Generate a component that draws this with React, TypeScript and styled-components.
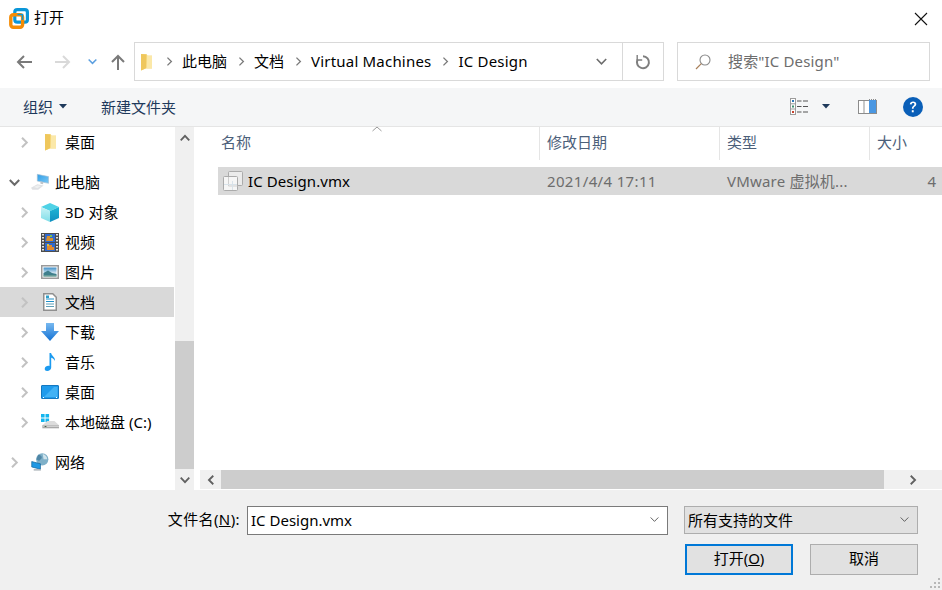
import * as React from 'react';
import styled, { createGlobalStyle } from 'styled-components';

const Global = createGlobalStyle`
    html, body {
        margin: 0;
        padding: 0;
        background: #fff;
        overflow: hidden;
    }
    * {
        box-sizing: border-box;
    }
`

const Dialog = styled.div`
    position: relative;
    width: 942px;
    height: 590px;
    display: flex;
    flex-direction: column;
    overflow: hidden;
    background: #fff;
    color: #000;
    font-family: 'Noto Sans', 'Noto Sans CJK SC', sans-serif;
    font-size: 15px;
    line-height: 20px;
`

const TitleBar = styled.div`
    height: 38px;
    flex: none;
    display: flex;
    align-items: center;
    padding: 0 14px 1px 9px;
    gap: 5px;
`

const TitleText = styled.span`
    flex: 1;
    padding-bottom: 3px;
`

const NavBar = styled.div`
    height: 50px;
    flex: none;
    display: flex;
    padding: 4px 12px 7px 0;
`

const NavButtons = styled.div`
    width: 134px;
    flex: none;
    display: grid;
    grid-template-columns: 39px 33px 22px 24px;
    align-items: center;
    padding-left: 16px;
`

const AddressBox = styled.div`
    width: 530px;
    flex: none;
    border: 1px solid #d9d9d9;
    display: flex;
    align-items: center;
    padding-left: 5px;
`

const FolderSlot = styled.span`
    width: 24px;
    display: flex;
`

const Crumb = styled.span<{ $latin?: boolean }>`
    margin: 0 9px 0 8px;
    padding-bottom: 2px;
    white-space: nowrap;
    letter-spacing: ${p => (p.$latin ? '.2px' : '0')};
`

const CrumbSep = styled.span`
    display: flex;
    width: 10px;
    justify-content: center;
`

const AddressEnd = styled.div`
    margin-left: auto;
    height: 100%;
    display: flex;
    align-items: center;
`

const DropZone = styled.div`
    width: 42px;
    display: flex;
    justify-content: center;
`

const RefreshZone = styled.div`
    width: 41px;
    height: 100%;
    border-left: 1px solid #d9d9d9;
    display: flex;
    align-items: center;
    justify-content: center;
`

const SearchBox = styled.div`
    width: 253px;
    margin-left: 13px;
    flex: none;
    border: 1px solid #d9d9d9;
    display: flex;
    align-items: center;
    padding-left: 17px;
    gap: 17px;
    color: #6d6d6d;
`

const SearchText = styled.span`
    padding-bottom: 2px;
    letter-spacing: .15px;
`

const ToolBar = styled.div`
    height: 39px;
    flex: none;
    background: #f5f6f7;
    border-bottom: 1px solid #e5e5e5;
    display: flex;
    align-items: center;
    padding: 0 19px 1px 23px;
    color: #1e395b;
`

const ToolLabel = styled.span`
    display: flex;
    align-items: center;
    gap: 6px;
    margin-right: 34px;
`

const ToolIcons = styled.div`
    margin-left: auto;
    display: flex;
    align-items: center;
`

const ViewCaret = styled.span`
    display: flex;
    margin: 0 28px 0 14px;
`

const HelpSlot = styled.span`
    display: flex;
    margin-left: 26px;
`

const Main = styled.div`
    height: 363px;
    flex: none;
    display: grid;
    grid-template-columns: 174px 21px 5px 1fr;
`

const Sidebar = styled.div`
    overflow: hidden;
    display: flex;
    flex-direction: column;
`

const TreeRow = styled.div<{ $level: number; $active?: boolean; $gap?: boolean }>`
    height: 30px;
    flex: none;
    display: flex;
    align-items: center;
    padding-left: ${p => (p.$level === 0 ? 9 : 19)}px;
    margin-top: ${p => (p.$gap ? 10 : 0)}px;
    background: ${p => (p.$active ? '#d9d9d9' : 'transparent')};
    white-space: nowrap;
`

const TreeToggle = styled.span`
    width: 11px;
    display: flex;
    justify-content: center;
    margin-right: 11px;
`

const TreeIcon = styled.span`
    width: 18px;
    height: 20px;
    margin-right: 6px;
    display: flex;
    align-items: center;
    justify-content: center;
`

const VScroll = styled.div`
    background: #f0f0f0;
    margin-left: 1px;
    width: 19px;
    display: flex;
    flex-direction: column;
    align-items: stretch;
`

const ScrollEnd = styled.div`
    height: 21px;
    flex: none;
    display: flex;
    align-items: center;
    justify-content: center;
`

const VTrack = styled.div`
    flex: 1;
    display: flex;
    flex-direction: column;
    justify-content: flex-end;
`

const VThumb = styled.div`
    height: 128px;
    background: #cdcdcd;
`

const ListPane = styled.div`
    display: flex;
    flex-direction: column;
    min-width: 0;
`

const ListHead = styled.div`
    height: 33px;
    flex: none;
    display: grid;
    grid-template-columns: 340px 180px 150px 1fr;
    color: #4c607a;
`

const HeadCell = styled.div<{ $first?: boolean }>`
    position: relative;
    display: flex;
    align-items: center;
    padding-left: ${p => (p.$first ? 21 : 7)}px;
    padding-bottom: 3px;
    border-right: 1px solid #e5e5e5;
    &:last-child {
        border-right: 0;
    }
`

const SortCaret = styled.svg`
    position: absolute;
    left: 172px;
    top: -1px;
`

const ListBody = styled.div`
    flex: 1;
    padding: 7px 0 0 18px;
`

const FileRow = styled.div`
    height: 28px;
    background: #d9d9d9;
    display: grid;
    grid-template-columns: 322px 180px 150px 1fr;
    align-items: center;
    color: #6d6d6d;
    white-space: nowrap;
`

const FileName = styled.div`
    display: flex;
    align-items: center;
    gap: 5px;
    padding-left: 5px;
    color: #000;
    letter-spacing: .08px;
`

const FileCell = styled.div<{ $spacing: number }>`
    padding-left: 7px;
    padding-bottom: 1px;
    letter-spacing: ${p => p.$spacing}px;
`

const FileSize = styled.div`
    text-align: right;
    padding-right: 6px;
    padding-bottom: 1px;
`

const HScroll = styled.div`
    height: 19px;
    margin-bottom: 1px;
    flex: none;
    display: grid;
    grid-template-columns: 21px 663px 1fr;
    background: #f0f0f0;
`

const HEnd = styled.div`
    display: flex;
    align-items: center;
    justify-content: center;
`

const HThumb = styled.div`
    background: #cdcdcd;
`

const Footer = styled.div`
    flex: 1;
    background: #f0f0f0;
    padding: 16px 24px 0 0;
    display: flex;
    flex-direction: column;
`

const FooterRow = styled.div`
    display: flex;
    align-items: flex-start;
    justify-content: flex-end;
`

const FileLabel = styled.label`
    margin-right: 7px;
    line-height: 27px;
    letter-spacing: .4px;
    white-space: nowrap;
`

const FileInput = styled.div`
    width: 421px;
    height: 29px;
    background: #fff;
    border: 1px solid #7a7a7a;
    display: flex;
    align-items: center;
    justify-content: space-between;
    padding: 0 8px 2px 3px;
    margin-right: 16px;
`

const TypeSelect = styled.div`
    width: 234px;
    height: 28px;
    background: #e1e1e1;
    border: 1px solid #adadad;
    display: flex;
    align-items: center;
    justify-content: space-between;
    padding: 0 8px 1px 3px;
`

const Actions = styled(FooterRow)`
    margin-top: 9px;
    gap: 17px;
`

const Button = styled.div<{ $primary?: boolean }>`
    width: 108px;
    height: 31px;
    background: #e1e1e1;
    border: ${p => (p.$primary ? '2px solid #0078d7' : '1px solid #adadad')};
    display: flex;
    align-items: center;
    justify-content: center;
    padding-bottom: 3px;
`

const Grip = styled.svg`
    position: absolute;
    right: 1px;
    bottom: 1px;
`

const Chevron: React.FC<{ dir?: 'right' | 'down' | 'left' | 'up'; color?: string; size?: number; width?: number }> = ({
    dir = 'right',
    color = '#c2c2c2',
    size = 11,
    width = 2,
}) => {
    const rot = { right: 0, down: 90, left: 180, up: 270 }[dir];
    return (
        <svg width={size} height={size} viewBox="0 0 11 11" fill="none" style={{ display: 'block' }}>
            <path d="M3 .8 7.800 5.500 3 10.200" stroke={color} strokeWidth={width} transform={`rotate(${rot} 5.500 5.500)`} />
        </svg>
    )
}

const FolderIcon: React.FC = () => (
    <svg width="13" height="18" viewBox="0 0 13 18">
        <path d="M1 1h5.500l1 1.500H12v13H6L1 17.500z" fill="#f8de8d" />
        <path d="M6.500 1.500 1 1v16.500l5.500-2.500z" fill="#efc75c" />
        <path d="M7 3h5v12.500H6.500z" fill="#fbe8a8" />
    </svg>
)

const VmwareIcon: React.FC = () => (
    <svg width="20" height="21" viewBox="0 0 20 21" style={{ flex: 'none' }}>
        <rect x="5.800" y="1.600" width="12.600" height="12.600" rx="2.500" fill="none" stroke="#0a96d8" strokeWidth="3.200" />
        <rect x="1.800" y="6.800" width="11.800" height="12.400" rx="2.500" fill="none" stroke="#f48c06" strokeWidth="3.400" />
        <path d="M8.500 6.500h5V12" fill="none" stroke="#0a96d8" strokeWidth="1.600" />
    </svg>
)

const PcIcon: React.FC = () => (
    <svg width="20" height="18" viewBox="0 0 20 18">
        <defs>
            <linearGradient id="screen" x1="0" y1="0" x2="1" y2="1">
                <stop offset="0" stopColor="#2f9ee8" />
                <stop offset="1" stopColor="#7cc8f4" />
            </linearGradient>
        </defs>
        <path d="M7 .5 19.500 3v7.500L7 8z" fill="url(#screen)" stroke="#a9c0d0" strokeWidth=".7" />
        <path d="M10.500 8.500v2.500l3 .5v-2.500z" fill="#bfc4c9" />
        <path d="M0 15.500 7 11.500l7 1.500-6 4.500H1.500z" fill="#dfe1e4" />
        <path d="M3 14.500 7.500 12.500l3.500 1-4 2.500z" fill="#eef0f1" />
    </svg>
)

const CubeIcon: React.FC = () => (
    <svg width="18" height="19" viewBox="0 0 18 19">
        <defs>
            <linearGradient id="cubeL" x1="0" y1="0" x2="0" y2="1">
                <stop offset="0" stopColor="#c9f3f6" />
                <stop offset="1" stopColor="#7fdde8" />
            </linearGradient>
            <linearGradient id="cubeR" x1="0" y1="0" x2="0" y2="1">
                <stop offset="0" stopColor="#1fb6d6" />
                <stop offset="1" stopColor="#0f8fc0" />
            </linearGradient>
        </defs>
        <path d="M9 0 18 4 9 8 0 4z" fill="#4fd2e6" />
        <path d="M0 4 9 8v11L0 15z" fill="url(#cubeL)" />
        <path d="M18 4 9 8v11l9-4z" fill="url(#cubeR)" />
    </svg>
)

const FilmIcon: React.FC = () => (
    <svg width="18" height="19" viewBox="0 0 18 19">
        <rect width="18" height="19" fill="#4d4d4d" />
        <path d="M1 1h2v1.500H1zm0 3h2v1.500H1zm0 3h2v1.500H1zm0 3h2v1.500H1zm0 3h2v1.500H1zm0 3h2v1.500H1zM15 1h2v1.500h-2zm0 3h2v1.500h-2zm0 3h2v1.500h-2zm0 3h2v1.500h-2zm0 3h2v1.500h-2zm0 3h2v1.500h-2z" fill="#e4e4e4" />
        <rect x="4" y="1" width="10" height="8" fill="#2f6ad0" />
        <rect x="4" y="10" width="10" height="8" fill="#2f6ad0" />
        <path d="M6 3h3v2h3v3H5z" fill="#d8902c" />
        <path d="M9 2h2v2H9z" fill="#7fc04a" />
        <path d="M6 12h5v2h2v3H6z" fill="#e08a2e" />
        <path d="M6 11h2v2H6z" fill="#e0c53a" />
    </svg>
)

const PictureIcon: React.FC = () => (
    <svg width="18" height="14" viewBox="0 0 18 14">
        <defs>
            <linearGradient id="sky" x1="0" y1="0" x2="0" y2="1">
                <stop offset="0" stopColor="#3f8fc8" />
                <stop offset=".6" stopColor="#cfe4f0" />
            </linearGradient>
        </defs>
        <rect x=".75" y=".75" width="16.500" height="12.500" fill="#fff" stroke="#9a9a9a" strokeWidth="1.500" />
        <rect x="2.500" y="2.500" width="13" height="9" fill="url(#sky)" />
        <path d="M2.500 8 7 5.500l4 2.500 4.500 1v2.500h-13z" fill="#3f7f8c" />
        <path d="M2.500 10.500h13v1h-13z" fill="#8cb6a0" />
    </svg>
)

const DocIcon: React.FC = () => (
    <svg width="14" height="18" viewBox="0 0 14 18">
        <path d="M.75.75h9l3.500 3.500v13H.75z" fill="#fff" stroke="#8f8f8f" strokeWidth="1.500" />
        <path d="M3 6h8M3 8.500h8" stroke="#1e8fc8" />
        <path d="M3 11h8M3 13.500h8" stroke="#5f9fb8" />
        <path d="M3 2.500h3V5H3z" fill="#2f9fc8" />
    </svg>
)

const DownloadIcon: React.FC = () => (
    <svg width="18" height="18" viewBox="0 0 18 18">
        <defs>
            <linearGradient id="dl" x1="0" y1="0" x2="0" y2="1">
                <stop offset="0" stopColor="#78b9f0" />
                <stop offset="1" stopColor="#1372d4" />
            </linearGradient>
        </defs>
        <path d="M5 0h8v8h5l-9 10L0 8h5z" fill="url(#dl)" />
    </svg>
)

const MusicIcon: React.FC = () => (
    <svg width="12" height="18" viewBox="0 0 12 18">
        <path d="M5.500 0h1.600c.4 3 4.400 4 3.900 8-.8-2-2.800-3-3.800-3.200V14.500c0 2-2 3.500-4 3.500S.5 17 .8 15.200C1.100 13.500 3.500 12.300 5.500 13z" fill="#1c9bf0" />
    </svg>
)

const DesktopIcon: React.FC = () => (
    <svg width="18" height="14" viewBox="0 0 18 14">
        <rect x=".5" y=".5" width="17" height="13" rx=".5" fill="#1f9bec" stroke="#1478c0" />
        <path d="M3 12 13 2h3.500v10z" fill="#42b2f5" />
        <path d="M2 12h1v1H2zM15 12h1v1h-1z" fill="#fff" />
    </svg>
)

const DiskIcon: React.FC = () => (
    <svg width="20" height="18" viewBox="0 0 20 18">
        <path d="M0 0h4v4H0zm5 0h4v4H5zM0 5h4v4H0zm5 0h4v4H5z" fill="#14b5ee" />
        <path d="M1.500 12.500 7 8h8l5 4.500z" fill="#dcdcdc" />
        <path d="M1.500 12.500H20V16H1.500z" fill="#a8a8a8" />
        <path d="M2.500 13H20v1.500H2.500z" fill="#d2d2d2" />
        <path d="M4 13.500h2v1H4z" fill="#3a5a3a" />
    </svg>
)

const NetworkIcon: React.FC = () => (
    <svg width="20" height="20" viewBox="0 0 20 20">
        <circle cx="12.500" cy="7" r="6.800" fill="#7fb0c8" />
        <path d="M8 2c2 0 4 1 4 3s-2 2-3 4l-3-2z" fill="#4f86a6" />
        <path d="M13 1c3 1 5 3 5 6h-4z" fill="#cfe3ec" />
        <path d="M.8 9.500 10.500 12v6L.8 15.500z" fill="#1f98e4" stroke="#17689e" strokeWidth=".8" />
        <path d="M3 18h8v1.500H3z" fill="#a5adb3" />
    </svg>
)

const VmxIcon: React.FC = () => (
    <svg width="20" height="20" viewBox="0 0 20 20" style={{ flex: 'none' }}>
        <rect x="5.500" y=".5" width="14" height="14" rx="1" fill="#ebebeb" stroke="#ababab" />
        <rect x=".5" y="5.500" width="14" height="14" rx="1" fill="#f6f6f6" stroke="#ababab" />
        <path d="M5.500 6v9h9" fill="none" stroke="#cfcfcf" />
        <path d="M9.500 10v9M1 13.500h13" stroke="#d9e3ea" />
    </svg>
)

const ViewIcon: React.FC = () => (
    <svg width="18" height="17" viewBox="0 0 18 17">
        <rect x=".5" y=".5" width="5" height="16" fill="#fff" stroke="#9c9c9c" />
        <path d="M.5 5.800h5M.5 11h5" stroke="#9c9c9c" />
        <rect x="2" y="2" width="2" height="2" fill="#2e78b8" />
        <rect x="2" y="7.500" width="2" height="2" fill="#3f8f6f" />
        <rect x="2" y="13" width="2" height="2" fill="#c8402c" />
        <path d="M7 3h4.500M13 3h5M7 8.500h4.500M13 8.500h5M7 14h4.500M13 14h5" stroke="#555" />
    </svg>
)

const PaneIcon: React.FC = () => (
    <svg width="19" height="15" viewBox="0 0 19 15">
        <rect x=".5" y="1.500" width="18" height="13" fill="#fff" stroke="#8c8c8c" />
        <rect x="5" y="2" width="2" height="12" fill="#c9c9c9" />
        <rect x="11" y="1" width="7" height="13" fill="#4a97e2" />
        <path d="M11 .5h8" stroke="#8c8c8c" strokeDasharray="1 1" />
    </svg>
)

const HelpIcon: React.FC = () => (
    <svg width="20" height="20" viewBox="0 0 20 20">
        <circle cx="10" cy="10" r="10" fill="#0a5fb8" />
        <path d="M6.800 7.300c.2-1.900 1.500-2.800 3.300-2.800 1.900 0 3.200 1 3.200 2.600 0 2.400-2.700 2.400-2.700 4.600H8.900c0-3 2.500-3 2.500-4.500 0-.7-.5-1.200-1.300-1.200-.9 0-1.400.5-1.500 1.500z" fill="#fff" />
        <rect x="8.800" y="13.200" width="1.900" height="2.100" fill="#fff" />
    </svg>
)

const Caret: React.FC<{ color?: string }> = ({ color = '#1e395b' }) => (
    <svg width="8" height="5" viewBox="0 0 8 5">
        <path d="M0 0h8L4 4.500z" fill={color} />
    </svg>
)

const Arrow: React.FC<{ color: string; rotate: number }> = ({ color, rotate }) => (
    <svg width="16" height="14" viewBox="0 0 16 14" fill="none" style={{ transform: `rotate(${rotate}deg)`, display: 'block' }}>
        <path d="M16 7H2M8 1 2 7l6 6" stroke={color} strokeWidth="2" />
    </svg>
)

const Sep: React.FC = () => (
    <CrumbSep><Chevron color="#7a7a7a" size={9} width={1.6} /></CrumbSep>
)

const tree: { label: string; icon: React.ReactNode; level: number; open?: boolean; active?: boolean; gap?: boolean }[] = [
    { label: '桌面', icon: <FolderIcon />, level: 1 },
    { label: '此电脑', icon: <PcIcon />, level: 0, open: true, gap: true },
    { label: '3D 对象', icon: <CubeIcon />, level: 1 },
    { label: '视频', icon: <FilmIcon />, level: 1 },
    { label: '图片', icon: <PictureIcon />, level: 1 },
    { label: '文档', icon: <DocIcon />, level: 1, active: true },
    { label: '下载', icon: <DownloadIcon />, level: 1 },
    { label: '音乐', icon: <MusicIcon />, level: 1 },
    { label: '桌面', icon: <DesktopIcon />, level: 1 },
    { label: '本地磁盘 (C:)', icon: <DiskIcon />, level: 1 },
    { label: '网络', icon: <NetworkIcon />, level: 0, gap: true },
];

const App: React.FC = () => {
    return (
        <Dialog>
            <Global />
            <TitleBar>
                <VmwareIcon />
                <TitleText>打开</TitleText>
                <svg width="14" height="14" viewBox="0 0 14 14">
                    <path d="M1 1l12 12M13 1 1 13" stroke="#111" strokeWidth="1.100" />
                </svg>
            </TitleBar>
            <NavBar>
                <NavButtons>
                    <Arrow color="#7a7a7a" rotate={0} />
                    <Arrow color="#d9d9d9" rotate={180} />
                    <Chevron dir="down" color="#5b9fe0" size={9} width={1.8} />
                    <Arrow color="#7a7a7a" rotate={90} />
                </NavButtons>
                <AddressBox>
                    <FolderSlot><FolderIcon /></FolderSlot>
                    <Sep />
                    <Crumb>此电脑</Crumb>
                    <Sep />
                    <Crumb>文档</Crumb>
                    <Sep />
                    <Crumb $latin>Virtual Machines</Crumb>
                    <Sep />
                    <Crumb $latin>IC Design</Crumb>
                    <AddressEnd>
                        <DropZone><Chevron dir="down" color="#6d6d6d" size={11} width={1.6} /></DropZone>
                        <RefreshZone>
                            <svg width="16" height="16" viewBox="0 0 16 16" fill="none">
                                <path d="M8 2.200A6 6 0 1 1 2.600 5.500" stroke="#7f7f7f" strokeWidth="2" />
                                <path d="M2.200 1v5h5" stroke="#7f7f7f" strokeWidth="1.400" />
                            </svg>
                        </RefreshZone>
                    </AddressEnd>
                </AddressBox>
                <SearchBox>
                    <svg width="16" height="16" viewBox="0 0 16 16" fill="none">
                        <circle cx="10" cy="6" r="5" stroke="#8a8a8a" strokeWidth="1.100" />
                        <path d="M6.300 9.700 1 15" stroke="#a87f5a" strokeWidth="1.200" />
                    </svg>
                    <SearchText>搜索"IC Design"</SearchText>
                </SearchBox>
            </NavBar>
            <ToolBar>
                <ToolLabel>组织 <Caret /></ToolLabel>
                <ToolLabel>新建文件夹</ToolLabel>
                <ToolIcons>
                    <ViewIcon />
                    <ViewCaret><Caret /></ViewCaret>
                    <PaneIcon />
                    <HelpSlot><HelpIcon /></HelpSlot>
                </ToolIcons>
            </ToolBar>
            <Main>
                <Sidebar>
                    {tree.map((item, i) => (
                        <TreeRow key={i} $level={item.level} $active={item.active} $gap={item.gap}>
                            <TreeToggle>
                                {item.open
                                    ? <Chevron dir="down" color="#6a6a6a" />
                                    : <Chevron />}
                            </TreeToggle>
                            <TreeIcon>{item.icon}</TreeIcon>
                            {item.label}
                        </TreeRow>
                    ))}
                </Sidebar>
                <VScroll>
                    <ScrollEnd><Chevron dir="up" color="#606060" size={10} /></ScrollEnd>
                    <VTrack><VThumb /></VTrack>
                    <ScrollEnd><Chevron dir="down" color="#606060" size={10} /></ScrollEnd>
                </VScroll>
                <div />
                <ListPane>
                    <ListHead>
                        <HeadCell $first>
                            名称
                            <SortCaret width="10" height="6" viewBox="0 0 10 6" fill="none">
                                <path d="M.5 5 5 1l4.500 4" stroke="#9a9a9a" />
                            </SortCaret>
                        </HeadCell>
                        <HeadCell>修改日期</HeadCell>
                        <HeadCell>类型</HeadCell>
                        <HeadCell>大小</HeadCell>
                    </ListHead>
                    <ListBody>
                        <FileRow>
                            <FileName><VmxIcon /> IC Design.vmx</FileName>
                            <FileCell $spacing={0.35}>2021/4/4 17:11</FileCell>
                            <FileCell $spacing={0.2}>VMware 虚拟机...</FileCell>
                            <FileSize>4</FileSize>
                        </FileRow>
                    </ListBody>
                    <HScroll>
                        <HEnd><Chevron dir="left" color="#606060" size={10} /></HEnd>
                        <HThumb />
                        <HEnd><Chevron color="#606060" size={10} /></HEnd>
                    </HScroll>
                </ListPane>
            </Main>
            <Footer>
                <FooterRow>
                    <FileLabel>文件名(<u>N</u>):</FileLabel>
                    <FileInput>
                        IC Design.vmx
                        <Chevron dir="down" color="#505050" size={9} width={1.100} />
                    </FileInput>
                    <TypeSelect>
                        所有支持的文件
                        <Chevron dir="down" color="#505050" size={9} width={1.100} />
                    </TypeSelect>
                </FooterRow>
                <Actions>
                    <Button $primary>打开(<u>O</u>)</Button>
                    <Button>取消</Button>
                </Actions>
            </Footer>
            <Grip width="11" height="11" viewBox="0 0 11 11">
                <path d="M8 0h2v2H8zM8 4h2v2H8zM4 4h2v2H4zM8 8h2v2H8zM4 8h2v2H4zM0 8h2v2H0z" fill="#b8b8b8" />
            </Grip>
        </Dialog>
    )
}

export default App;
